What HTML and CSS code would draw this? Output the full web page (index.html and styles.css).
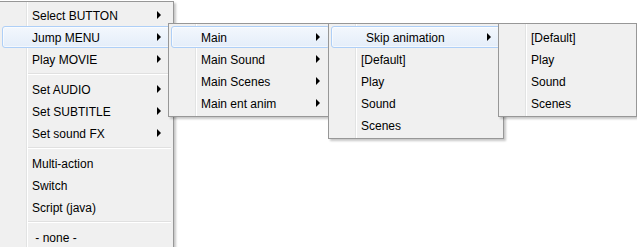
FILE: index.html
```html
<!DOCTYPE html>
<html lang="en">

<head>
  <meta charset="UTF-8" />
  <meta name="viewport" content="width=device-width, initial-scale=1.0" />
  <link rel="stylesheet" href="styles.css">
  <title>Menus</title>
</head>

<body>
  <div class="desk">

    <ul class="menu menu-root">
      <li class="item"><span class="label">Select BUTTON</span><i class="arrow"></i></li>
      <li class="item hover"><span class="label">Jump MENU</span><i class="arrow"></i></li>
      <li class="item"><span class="label">Play MOVIE</span><i class="arrow"></i></li>
      <li class="sep"></li>
      <li class="item"><span class="label">Set AUDIO</span><i class="arrow"></i></li>
      <li class="item"><span class="label">Set SUBTITLE</span><i class="arrow"></i></li>
      <li class="item"><span class="label">Set sound FX</span><i class="arrow"></i></li>
      <li class="sep"></li>
      <li class="item"><span class="label">Multi-action</span></li>
      <li class="item"><span class="label">Switch</span></li>
      <li class="item"><span class="label">Script (java)</span></li>
      <li class="sep"></li>
      <li class="item"><span class="label">&nbsp;- none -</span></li>
    </ul>

    <ul class="menu menu-jump">
      <li class="item hover"><span class="label">Main</span><i class="arrow"></i></li>
      <li class="item"><span class="label">Main Sound</span><i class="arrow"></i></li>
      <li class="item"><span class="label">Main Scenes</span><i class="arrow"></i></li>
      <li class="item"><span class="label">Main ent anim</span><i class="arrow"></i></li>
    </ul>

    <ul class="menu menu-main">
      <li class="item hover"><span class="label indent">Skip animation</span><i class="arrow"></i></li>
      <li class="item"><span class="label">[Default]</span></li>
      <li class="item"><span class="label">Play</span></li>
      <li class="item"><span class="label">Sound</span></li>
      <li class="item"><span class="label">Scenes</span></li>
    </ul>

    <ul class="menu menu-skip">
      <li class="item"><span class="label">[Default]</span></li>
      <li class="item"><span class="label">Play</span></li>
      <li class="item"><span class="label">Sound</span></li>
      <li class="item"><span class="label">Scenes</span></li>
    </ul>

  </div>
</body>

</html>
```

FILE: styles.css
```css
* {
  box-sizing: border-box;
  padding: 0;
  margin: 0;
}

body {
  background-color: #fff;
  font-family: "Liberation Sans", Arial, sans-serif;
  font-size: 12px;
  color: #000;
  overflow: hidden;
}

.desk {
  position: relative;
  width: 637px;
  height: 247px;
  overflow: hidden;
}

/* popup menus sit on top of each other like real cascading menus */
.menu {
  position: absolute;
  list-style: none;
  border: 1px solid #979797;
  padding: 2px;
  background: linear-gradient(to right, transparent 26px, #e2e3e3 26px, #e2e3e3 27px, #fff 27px, #fff 28px, transparent 28px), #f0f0f0;
  box-shadow: 2px 2px 2px rgba(0, 0, 0, .22);
}

.menu-root {
  left: -1px;
  top: 1px;
  width: 175px;
  z-index: 1;
}

.menu-jump {
  left: 168px;
  top: 23px;
  width: 165px;
  z-index: 2;
}

.menu-main {
  left: 328px;
  top: 23px;
  width: 176px;
  z-index: 3;
}

.menu-skip {
  left: 498px;
  top: 23px;
  width: 139px;
  z-index: 4;
}

.item {
  height: 22px;
  display: flex;
  align-items: center;
  padding: 1px 9px 0 29px;
  border: 1px solid transparent;
  border-radius: 3px;
  white-space: nowrap;
}

.item.hover {
  border-color: #aecff7;
  background: linear-gradient(#f3f7fd, #e4edf9);
  box-shadow: inset 0 0 0 1px rgba(255, 255, 255, .6);
}

.label.indent {
  padding-left: 5px;
}

.arrow {
  margin-left: auto;
  margin-top: -1px;
  width: 0;
  height: 0;
  border-left: 4px solid #000;
  border-top: 4px solid transparent;
  border-bottom: 4px solid transparent;
}

.sep {
  height: 8px;
  margin-left: 26px;
  display: flex;
  flex-direction: column;
  justify-content: center;
}

.sep::before {
  content: "";
  display: block;
  height: 1px;
  background: #e0e0e0;
  border-bottom: 1px solid #fff;
  box-sizing: content-box;
}
```
